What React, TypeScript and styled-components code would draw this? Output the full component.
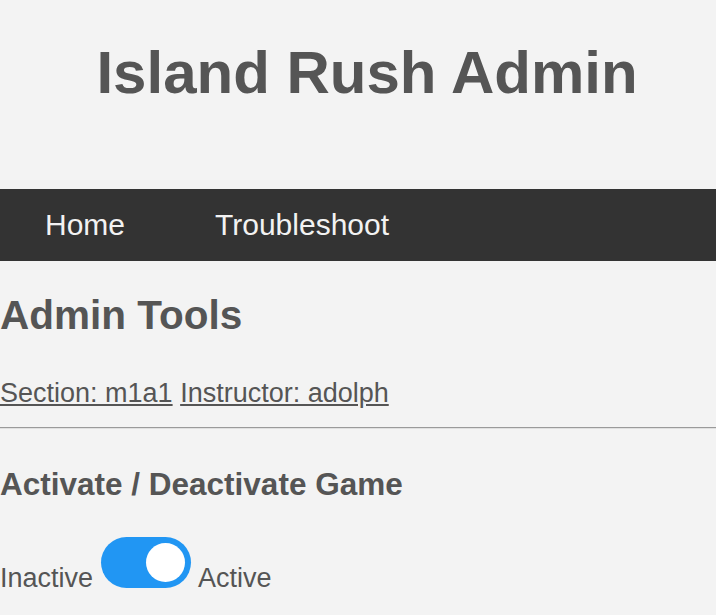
import React from "react";
import styled, { createGlobalStyle } from "styled-components";

const GlobalStyle = createGlobalStyle`
  html, body {
    margin: 0;
    padding: 0;
    background: #f3f3f3;
  }
  body {
    font-family: "Liberation Sans", Arial, sans-serif;
    color: #555555;
  }
`;

const Header = styled.header`
  padding: 38px 0 82px 18px;
  text-align: center;
`;

const Title = styled.h1`
  margin: 0;
  font-size: 60px;
  font-weight: bold;
  line-height: 69px;
  color: #555555;
`;

const NavBar = styled.nav`
  display: flex;
  background: #333333;
`;

const NavLink = styled.a`
  display: block;
  padding: 19px 45px;
  font-size: 30px;
  line-height: 34px;
  color: #f2f2f2;
  text-decoration: none;
`;

const Main = styled.main`
  padding: 31px 0 0;
`;

const SectionTitle = styled.h2`
  margin: 0;
  font-size: 40.5px;
  line-height: 46px;
  font-weight: bold;
`;

const InfoLine = styled.p`
  margin: 40px 0 0;
  font-size: 27px;
  line-height: 31px;
`;

const InfoLink = styled.a`
  color: #555555;
  text-decoration: underline;
`;

const Rule = styled.hr`
  margin: 18px 0 0;
  border: none;
  border-top: 1px solid #9a9a9a;
  border-bottom: 1px solid #e0e0e0;
  height: 0;
`;

const SubTitle = styled.h3`
  margin: 37px 0 0;
  font-size: 31.5px;
  line-height: 36px;
  font-weight: bold;
`;

const ToggleRow = styled.p`
  margin: 35px 0 0;
  font-size: 27px;
  line-height: 31px;
`;

const Toggle = styled.span<{ $on: boolean }>`
  display: inline-block;
  box-sizing: border-box;
  width: 90px;
  height: 51px;
  padding: 6px;
  margin: 0 7px 0 8px;
  border-radius: 51px;
  background: ${(p) => (p.$on ? "#2196f3" : "#cccccc")};
  vertical-align: -1px;
  cursor: pointer;
`;

const Knob = styled.span<{ $on: boolean }>`
  display: block;
  width: 39px;
  height: 39px;
  border-radius: 50%;
  background: #ffffff;
  margin-left: ${(p) => (p.$on ? "auto" : "0")};
`;

export default function App() {
  const [on, setOn] = React.useState(true);
  return (
    <>
      <GlobalStyle />
      <Header>
        <Title>Island Rush Admin</Title>
      </Header>
      <NavBar>
        <NavLink href="#">Home</NavLink>
        <NavLink href="#">Troubleshoot</NavLink>
      </NavBar>
      <Main>
        <SectionTitle>Admin Tools</SectionTitle>
        <InfoLine>
          <InfoLink href="#">Section: m1a1</InfoLink> <InfoLink href="#">Instructor: adolph</InfoLink>
        </InfoLine>
        <Rule />
        <SubTitle>Activate / Deactivate Game</SubTitle>
        <ToggleRow>
          Inactive
          <Toggle $on={on} onClick={() => setOn(!on)}>
            <Knob $on={on} />
          </Toggle>
          Active
        </ToggleRow>
      </Main>
    </>
  );
}
